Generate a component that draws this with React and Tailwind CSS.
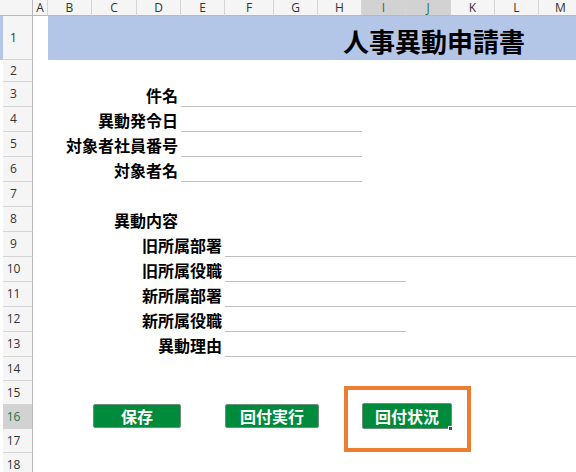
import React from 'react';

const COLS = ['A', 'B', 'C', 'D', 'E', 'F', 'G', 'H', 'I', 'J', 'K', 'L', 'M'];
const COL_W = ['w-[15px]', 'w-[44px]', 'w-[45px]', 'w-[44px]', 'w-[44px]', 'w-[49px]', 'w-[44px]', 'w-[44px]', 'w-[44px]', 'w-[45px]', 'w-[44px]', 'w-[44px]', 'w-[44px]'];
const SELECTED_COLS = ['I', 'J'];
const GRID = 'grid grid-cols-[15px_44px_45px_44px_44px_49px_44px_44px_44px_45px_44px_44px_44px] w-[550px] shrink-0';

const jp = { fontFamily: '"Noto Sans CJK JP", "Noto Sans", sans-serif' };

const RowHeader = ({ n, selected, blue }) => (
  <div className="flex h-full shrink-0">
    <div className={`w-[3px] h-full ${blue ? 'bg-[#b4c6e7]' : 'bg-white'}`} />
    <div
      className={`w-[30px] h-full flex items-center justify-center pr-[8px] text-[12px] border-b border-r border-b-[#d4d4d4] border-r-[#b8b8b8] ${
        selected ? 'bg-[#d2d2d2] text-[#217346]' : 'bg-[#f5f5f5] text-[#333]'
      }`}
      style={{ fontFamily: '"Open Sans", sans-serif' }}
    >
      {n}
    </div>
  </div>
);

const Row = ({ n, h, selected, blue, children }) => (
  <div className={`flex ${h}`}>
    <RowHeader n={n} selected={selected} blue={blue} />
    <div className={`${GRID} h-full relative`}>{children}</div>
  </div>
);

const Label = ({ span, children }) => (
  <div className={`${span} flex items-center justify-end pr-[3px] pt-[1px] text-[16px] font-bold text-black whitespace-nowrap`} style={jp}>
    {children}
  </div>
);

const Line = ({ span }) => <div className={`${span} border-b border-[#bfbfbf]`} />;

const SheetButton = ({ className, children }) => (
  <div
    className={`absolute flex items-center justify-center bg-[#008a3b] border border-[#6f8f7a] rounded-[2px] text-white text-[16px] font-bold ${className}`}
    style={jp}
  >
    {children}
  </div>
);

export default function App() {
  return (
    <div className="w-[576px] h-[472px] overflow-hidden bg-white relative">
      {/* column headers */}
      <div className="flex h-[16px]">
        <div className="w-[33px] shrink-0 bg-[#f5f5f5] border-r border-b border-r-[#b8b8b8] border-b-[#b8b8b8]" />
        {COLS.map((c, i) => (
          <div
            key={c}
            className={`${COL_W[i]} shrink-0 flex items-center justify-center text-[12px] border-r border-b border-r-[#d4d4d4] border-b-[#b8b8b8] ${
              SELECTED_COLS.includes(c) ? 'bg-[#d2d2d2] text-[#217346]' : 'bg-[#f5f5f5] text-[#333]'
            }`}
            style={{ fontFamily: '"Open Sans", sans-serif' }}
          >
            {c}
          </div>
        ))}
      </div>

      <Row n={1} h="h-[44px]" blue>
        <div className="col-[2/-1] bg-[#b4c6e7] flex items-center justify-end pt-[6px] pr-[58px]">
          <span className="text-[26px] font-bold text-black leading-none" style={jp}>人事異動申請書</span>
        </div>
      </Row>
      <Row n={2} h="h-[22px]" />
      <Row n={3} h="h-[25px]">
        <Label span="col-[2/5]">件名</Label>
        <Line span="col-[5/-1]" />
      </Row>
      <Row n={4} h="h-[25px]">
        <Label span="col-[2/5]">異動発令日</Label>
        <Line span="col-[5/9]" />
      </Row>
      <Row n={5} h="h-[25px]">
        <Label span="col-[2/5]">対象者社員番号</Label>
        <Line span="col-[5/9]" />
      </Row>
      <Row n={6} h="h-[25px]">
        <Label span="col-[2/5]">対象者名</Label>
        <Line span="col-[5/9]" />
      </Row>
      <Row n={7} h="h-[25px]" />
      <Row n={8} h="h-[25px]">
        <Label span="col-[2/5]">異動内容</Label>
      </Row>
      <Row n={9} h="h-[25px]">
        <Label span="col-[2/6]">旧所属部署</Label>
        <Line span="col-[6/-1]" />
      </Row>
      <Row n={10} h="h-[25px]">
        <Label span="col-[2/6]">旧所属役職</Label>
        <Line span="col-[6/10]" />
      </Row>
      <Row n={11} h="h-[25px]">
        <Label span="col-[2/6]">新所属部署</Label>
        <Line span="col-[6/-1]" />
      </Row>
      <Row n={12} h="h-[25px]">
        <Label span="col-[2/6]">新所属役職</Label>
        <Line span="col-[6/10]" />
      </Row>
      <Row n={13} h="h-[25px]">
        <Label span="col-[2/6]">異動理由</Label>
        <Line span="col-[6/-1]" />
      </Row>
      <Row n={14} h="h-[24px]" />
      <Row n={15} h="h-[24px]" />
      <Row n={16} h="h-[24px]" selected>
        <SheetButton className="left-[60px] top-[-1px] w-[88px] h-[24px]">保存</SheetButton>
        <SheetButton className="left-[192px] top-[-1px] w-[94px] h-[24px]">回付実行</SheetButton>
        {/* selected shape with annotation box */}
        <SheetButton className="left-[329px] top-[-2px] w-[90px] h-[26px]">回付状況</SheetButton>
        <div className="absolute left-[415px] top-[21px] w-[5px] h-[5px] bg-[#1e6e3c] border border-white" />
        <div className="absolute left-[311px] top-[-19px] w-[127px] h-[66px] border-[4px] border-[#ed7d31]" />
      </Row>
      <Row n={17} h="h-[24px]" />
      <Row n={18} h="h-[24px]" />
    </div>
  );
}
